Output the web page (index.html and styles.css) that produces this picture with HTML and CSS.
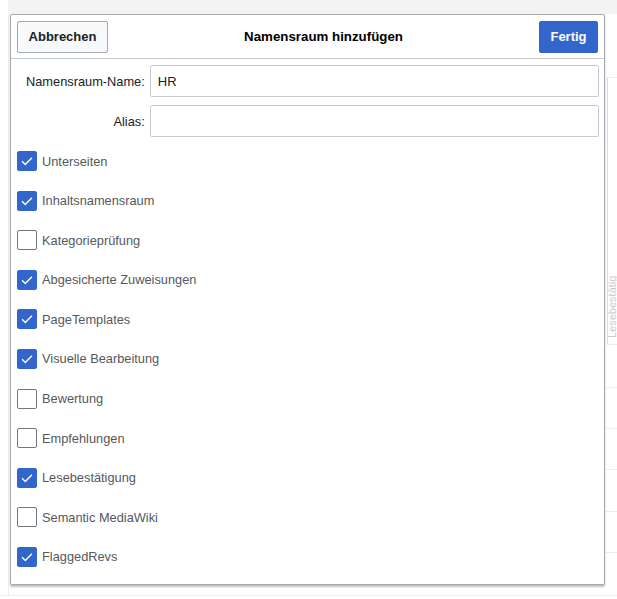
FILE: index.html
```html
<!DOCTYPE html>
<html lang="de">
<head>
<meta charset="utf-8">
<link rel="stylesheet" href="styles.css">
</head>
<body>
<div class="page">
  <div class="topbar"></div>
  <div class="main">
    <div class="leftcol"></div>
    <div class="rightcol">
      <div class="cell c1"></div>
      <div class="cell c2"><span class="vtext">Lesebestätig</span></div>
      <div class="cell c3"></div>
      <div class="cell c4"></div>
      <div class="cell c5"></div>
      <div class="cell c6"></div>
      <div class="cell c7"></div>
      <div class="cell c8"></div>
    </div>
  </div>
</div>

<div class="dialog">
  <div class="head">
    <button class="btn btn-cancel">Abbrechen</button>
    <div class="title">Namensraum hinzufügen</div>
    <button class="btn btn-done">Fertig</button>
  </div>
  <div class="body">
    <div class="field">
      <label class="flabel">Namensraum-Name:</label>
      <div class="input">HR</div>
    </div>
    <div class="field">
      <label class="flabel">Alias:</label>
      <div class="input"></div>
    </div>
    <ul class="checks">
      <li class="check on"><span class="box"><svg viewBox="0 0 20 20"><path d="M4.5 10.2l3.6 3.6 7.4-7.4"/></svg></span><span class="clabel">Unterseiten</span></li>
      <li class="check on"><span class="box"><svg viewBox="0 0 20 20"><path d="M4.5 10.2l3.6 3.6 7.4-7.4"/></svg></span><span class="clabel">Inhaltsnamensraum</span></li>
      <li class="check"><span class="box"></span><span class="clabel">Kategorieprüfung</span></li>
      <li class="check on"><span class="box"><svg viewBox="0 0 20 20"><path d="M4.5 10.2l3.6 3.6 7.4-7.4"/></svg></span><span class="clabel">Abgesicherte Zuweisungen</span></li>
      <li class="check on"><span class="box"><svg viewBox="0 0 20 20"><path d="M4.5 10.2l3.6 3.6 7.4-7.4"/></svg></span><span class="clabel">PageTemplates</span></li>
      <li class="check on"><span class="box"><svg viewBox="0 0 20 20"><path d="M4.5 10.2l3.6 3.6 7.4-7.4"/></svg></span><span class="clabel">Visuelle Bearbeitung</span></li>
      <li class="check"><span class="box"></span><span class="clabel">Bewertung</span></li>
      <li class="check"><span class="box"></span><span class="clabel">Empfehlungen</span></li>
      <li class="check on"><span class="box"><svg viewBox="0 0 20 20"><path d="M4.5 10.2l3.6 3.6 7.4-7.4"/></svg></span><span class="clabel">Lesebestätigung</span></li>
      <li class="check"><span class="box"></span><span class="clabel">Semantic MediaWiki</span></li>
      <li class="check on"><span class="box"><svg viewBox="0 0 20 20"><path d="M4.5 10.2l3.6 3.6 7.4-7.4"/></svg></span><span class="clabel">FlaggedRevs</span></li>
    </ul>
  </div>
</div>
</body>
</html>
```

FILE: styles.css
```css
* { box-sizing: border-box; }
html, body { margin: 0; padding: 0; }
body {
  width: 617px;
  height: 599px;
  overflow: hidden;
  background: #fff;
  font-family: "Liberation Sans", Arial, sans-serif;
  position: relative;
}

/* background page */
.page { width: 617px; height: 599px; }
.topbar {
  height: 14px;
  margin-left: 8px;
  background: #f3f3f3;
}
.main {
  display: flex;
  height: 582px;
  border-bottom: 1px solid #eaecf0;
}
.leftcol {
  flex: 1;
  margin-left: 8px;
  border-left: 1px solid #eeeeee;
}
.rightcol {
  width: 11px;
  display: flex;
  flex-direction: column;
}
.cell { border-bottom: 1px solid #eaecf0; }
.c1 { height: 64px; }
.c2 {
  height: 267px;
  border-left: 1px solid #dcdcdc;
  margin-left: 1px;
}
.vtext {
  display: block;
  transform: rotate(-90deg);
  transform-origin: left top;
  white-space: nowrap;
  font-size: 11px;
  line-height: 9px;
  color: #c8ccd1;
  width: 72px;
  margin-top: 260px;
  margin-left: 0;
}
.c3 { height: 43px; }
.c4 { height: 41px; }
.c5 { height: 42px; }
.c6 { height: 42px; }
.c7 { height: 41px; }
.c8 { height: 42px; border-bottom: none; }

/* dialog overlay */
.dialog {
  position: absolute;
  left: 10px;
  top: 14px;
  width: 595px;
  height: 571px;
  background: #fff;
  border: 1px solid #a2a9b1;
  border-radius: 2px;
  box-shadow: 0 2px 2px rgba(0, 0, 0, 0.25);
}
.head {
  display: flex;
  align-items: center;
  height: 44px;
  padding: 0 6px;
  border-bottom: 1px solid #c8ccd1;
}
.btn {
  height: 32px;
  font-family: "Liberation Sans", Arial, sans-serif;
  font-size: 13px;
  font-weight: bold;
  border-radius: 2px;
  padding: 0;
  margin: 0;
  cursor: pointer;
}
.btn-cancel {
  width: 91px;
  background: #f8f9fa;
  border: 1px solid #a2a9b1;
  color: #202122;
}
.btn-done {
  width: 59px;
  background: #3366cc;
  border: 1px solid #3366cc;
  color: #fff;
}
.title {
  flex: 1;
  text-align: center;
  font-size: 13.3px;
  font-weight: bold;
  color: #000;
}

.body {
  padding: 6px 5px 0 6px;
}
.field {
  display: flex;
  align-items: center;
  margin-bottom: 8px;
}
.flabel {
  width: 128px;
  text-align: right;
  margin-right: 5px;
  font-size: 12.8px;
  color: #202122;
}
.input {
  width: 450px;
  height: 32px;
  border: 1px solid #c8ccd1;
  border-radius: 2px;
  padding: 0 7px;
  display: flex;
  align-items: center;
  font-size: 13px;
  color: #202122;
}

.checks {
  list-style: none;
  margin: 14px 0 0 0;
  padding: 0;
  display: flex;
  flex-direction: column;
  gap: 19.6px;
}
.check {
  display: flex;
  align-items: center;
  height: 20px;
}
.box {
  width: 20px;
  height: 20px;
  border: 1px solid #72777d;
  border-radius: 2px;
  background: #fff;
  margin-right: 5px;
  display: flex;
  flex: none;
}
.check.on .box {
  background: #3366cc;
  border-color: #3366cc;
}
.box svg {
  width: 18px;
  height: 18px;
  fill: none;
  stroke: #fff;
  stroke-width: 1.6;
}
.clabel {
  font-size: 12.8px;
  color: #54595d;
}
```
